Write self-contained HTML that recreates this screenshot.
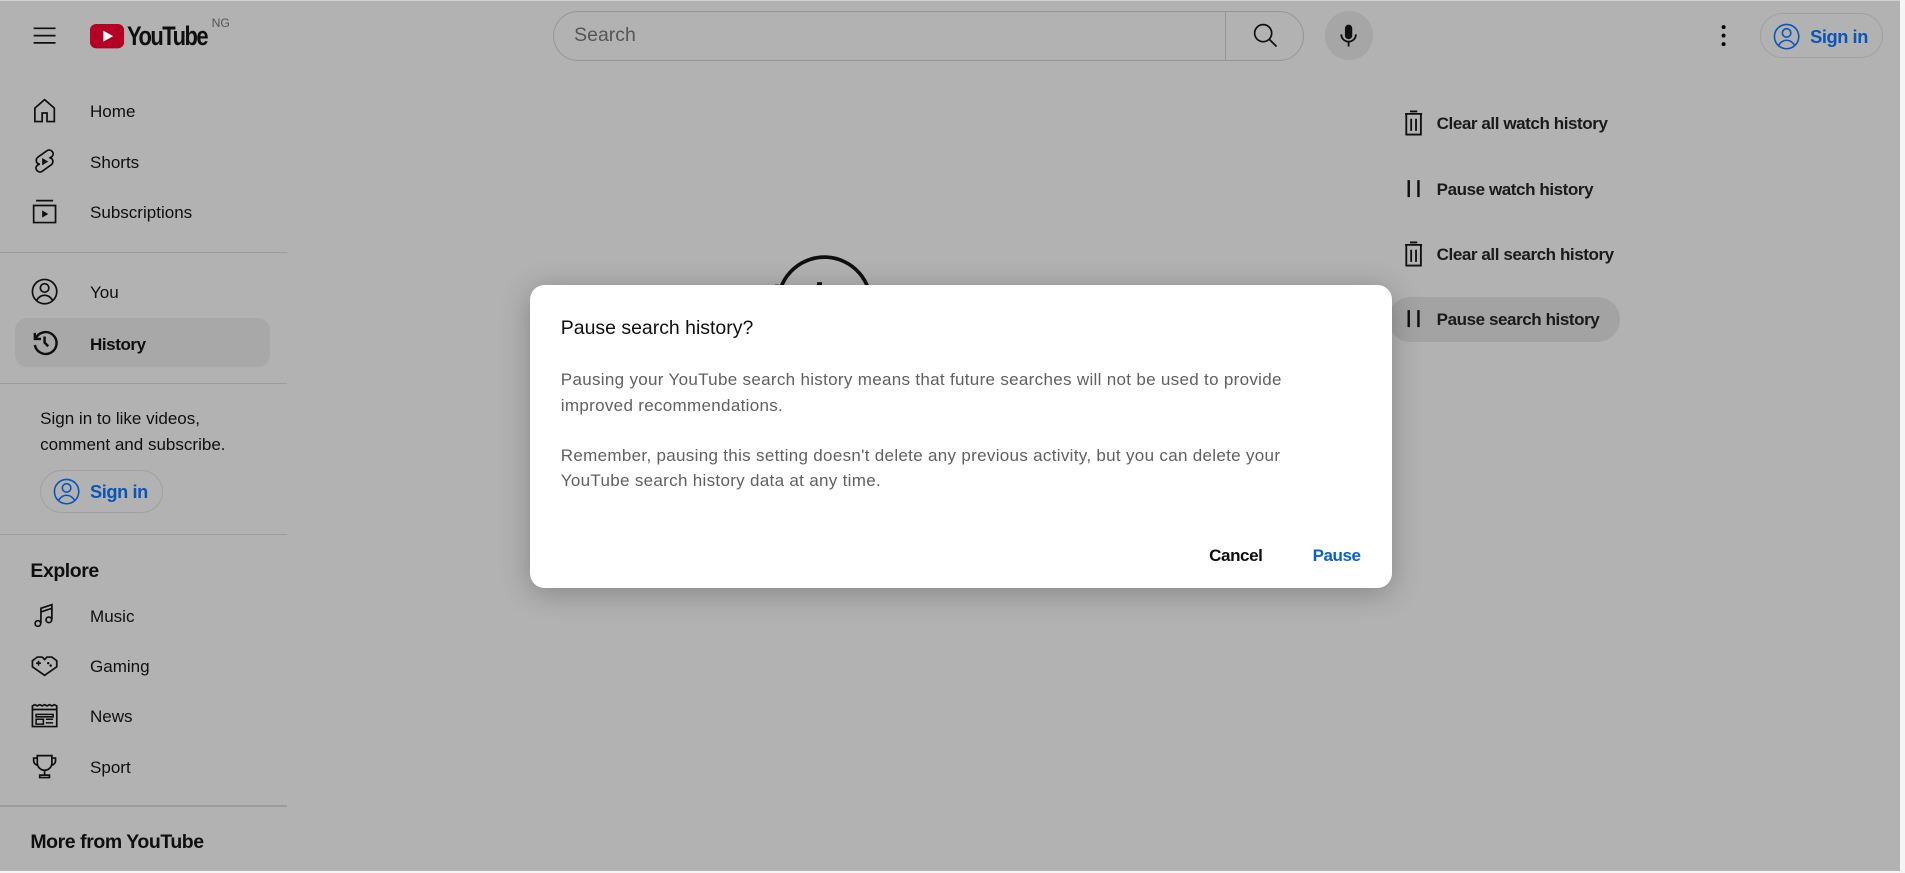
<!DOCTYPE html>
<html><head><meta charset="utf-8"><style>
html,body{margin:0;padding:0;width:1905px;height:873px;overflow:hidden;background:#fff;}
#w{zoom:1.21648;width:1566px;height:719px;position:relative;background:#b2b2b2;font-family:"Liberation Sans",sans-serif;color:#0f0f0f;overflow:hidden;}
.a{position:absolute;}
.t{position:absolute;font-size:14px;line-height:16px;white-space:nowrap;}
.b{font-weight:bold;letter-spacing:-0.35px;}
.ic{position:absolute;width:24px;height:24px;}
.div{position:absolute;left:0;width:236px;height:1px;background:#9c9c9c;}
svg{overflow:visible}
</style></head><body><div id="w">
<div class="a" style="left:0;top:0;width:1566px;height:1px;background:#d0d0d0"></div>
<div class="a" style="left:1562px;top:0;width:4px;height:719px;background:#f5f5f5"></div>
<div class="a" style="left:0;top:716px;width:1566px;height:3px;background:#f5f5f5"></div>
<!-- header -->
<svg class="ic" style="left:25px;top:17px" viewBox="0 0 24 24"><path d="M3 6h18M3 12h18M3 18h18" stroke="#0f0f0f" stroke-width="1.4"/></svg>
<svg class="a" style="left:74px;top:20px" width="28" height="20" viewBox="0 0 28 20"><rect width="28" height="20" rx="5" fill="#b30024"/><path d="M11 5.5v9l8-4.5z" fill="#fff"/></svg>
<div class="a" style="left:104px;top:17px;font-size:22px;letter-spacing:-1.5px;font-weight:bold;transform:scaleX(.82);transform-origin:left;line-height:26px;">YouTube</div>
<div class="a" style="left:174px;top:13px;font-size:10px;color:#555">NG</div>
<div class="a" style="left:455px;top:9px;width:617px;height:41px;border:1px solid #969696;border-radius:21px;box-sizing:border-box;"></div>
<div class="a" style="left:1007px;top:10px;width:1px;height:39px;background:#969696"></div>
<div class="a" style="left:472px;top:20px;font-size:16px;color:#555">Search</div>
<svg class="ic" style="left:1028px;top:17px" viewBox="0 0 24 24"><circle cx="10" cy="10" r="7" fill="none" stroke="#0f0f0f" stroke-width="1.4"/><path d="M15 15l6 6" stroke="#0f0f0f" stroke-width="1.4"/></svg>
<div class="a" style="left:1089px;top:9px;width:40px;height:40px;border-radius:50%;background:#a6a6a6"></div>
<svg class="ic" style="left:1097px;top:17px" viewBox="0 0 24 24"><rect x="9" y="3" width="6" height="12" rx="3" fill="#0f0f0f"/><path d="M6 11a6 6 0 0 0 12 0M12 17v4" stroke="#0f0f0f" stroke-width="1.5" fill="none"/></svg>
<svg class="ic" style="left:1405px;top:17px" viewBox="0 0 24 24"><circle cx="12" cy="5" r="1.6"/><circle cx="12" cy="12" r="1.6"/><circle cx="12" cy="19" r="1.6"/></svg>
<div class="a" style="left:1447px;top:11px;width:101px;height:37px;border:1px solid #a0a0a0;border-radius:19px;box-sizing:border-box"></div>
<svg class="ic" style="left:1457px;top:18px" viewBox="0 0 24 24"><circle cx="12" cy="12" r="10" fill="none" stroke="#0a55b8" stroke-width="1.3"/><circle cx="12" cy="9" r="3.5" fill="none" stroke="#0a55b8" stroke-width="1.3"/><path d="M5.5 19c2-3 4-4 6.5-4s4.5 1 6.5 4" fill="none" stroke="#0a55b8" stroke-width="1.3"/></svg>
<div class="t b" style="left:1488px;top:22px;color:#0a55b8;font-size:15px">Sign in</div>
<!-- sidebar -->
<svg class="ic" style="left:25px;top:79px" viewBox="0 0 24 24"><path d="M4 10l8-7 8 7v11h-6v-7h-4v7H4z" fill="none" stroke="#0f0f0f" stroke-width="1.4"/></svg>
<div class="t" style="left:74px;top:84px">Home</div>
<svg class="ic" style="left:25px;top:121px" viewBox="0 0 24 24"><path d="M14 3c3-2 7 2 4 5l-2 1c3 0 4 4 1 6l-7 5c-3 2-7-2-4-5l2-1c-3 0-4-4-1-6z" fill="none" stroke="#0f0f0f" stroke-width="1.4"/><path d="M10 9v6l5-3z" fill="#0f0f0f"/></svg>
<div class="t" style="left:74px;top:126px">Shorts</div>
<svg class="ic" style="left:25px;top:162px" viewBox="0 0 24 24"><path d="M5 3h14M3 7h18v14H3z" fill="none" stroke="#0f0f0f" stroke-width="1.4"/><path d="M10 11v6l5-3z" fill="#0f0f0f"/></svg>
<div class="t" style="left:74px;top:167px">Subscriptions</div>
<div class="div" style="top:207px"></div>
<svg class="ic" style="left:25px;top:228px" viewBox="0 0 24 24"><circle cx="12" cy="12" r="10" fill="none" stroke="#0f0f0f" stroke-width="1.4"/><circle cx="12" cy="9" r="3.5" fill="none" stroke="#0f0f0f" stroke-width="1.4"/><path d="M5.5 19c2-3 4-4 6.5-4s4.5 1 6.5 4" fill="none" stroke="#0f0f0f" stroke-width="1.4"/></svg>
<div class="t" style="left:74px;top:233px">You</div>
<div class="a" style="left:12px;top:261px;width:210px;height:41px;border-radius:10px;background:#a8a8a8"></div>
<svg class="ic" style="left:25px;top:270px" viewBox="0 0 24 24"><path d="M4 4v5h5" fill="none" stroke="#0f0f0f" stroke-width="2"/><path d="M4.5 9A9 9 0 1 1 4 14" fill="none" stroke="#0f0f0f" stroke-width="2"/><path d="M12 7v5l3 3" fill="none" stroke="#0f0f0f" stroke-width="2"/></svg>
<div class="t b" style="left:74px;top:275px">History</div>
<div class="div" style="top:315px"></div>
<div class="t" style="left:33px;top:334px;line-height:21px">Sign in to like videos,<br>comment and subscribe.</div>
<div class="a" style="left:33px;top:386px;width:101px;height:36px;border:1px solid #a0a0a0;border-radius:18px;box-sizing:border-box"></div>
<svg class="ic" style="left:43px;top:392px" viewBox="0 0 24 24"><circle cx="12" cy="12" r="10" fill="none" stroke="#0a55b8" stroke-width="1.3"/><circle cx="12" cy="9" r="3.5" fill="none" stroke="#0a55b8" stroke-width="1.3"/><path d="M5.5 19c2-3 4-4 6.5-4s4.5 1 6.5 4" fill="none" stroke="#0a55b8" stroke-width="1.3"/></svg>
<div class="t b" style="left:74px;top:396px;color:#0a55b8;font-size:15px">Sign in</div>
<div class="div" style="top:439px"></div>
<div class="t b" style="left:25px;top:461px;font-size:16px;line-height:18px">Explore</div>
<svg class="ic" style="left:25px;top:494px" viewBox="0 0 24 24"><path d="M9 18V6l9-3v12" fill="none" stroke="#0f0f0f" stroke-width="1.4"/><circle cx="6.5" cy="18.5" r="2.3" fill="none" stroke="#0f0f0f" stroke-width="1.4"/><circle cx="15.5" cy="15.5" r="2.3" fill="none" stroke="#0f0f0f" stroke-width="1.4"/><path d="M9 9l9-3" stroke="#0f0f0f" stroke-width="1.4"/></svg>
<div class="t" style="left:74px;top:499px">Music</div>
<svg class="ic" style="left:25px;top:535px" viewBox="0 0 24 24"><path d="M2 8l4-3h4l2 2 2-2h4l4 3v5l-10 7L2 13z" fill="none" stroke="#0f0f0f" stroke-width="1.4"/><path d="M5 10h4M7 8v4" stroke="#0f0f0f" stroke-width="1.3"/><circle cx="15" cy="10" r="1"/><circle cx="17" cy="12" r="1"/></svg>
<div class="t" style="left:74px;top:540px">Gaming</div>
<svg class="ic" style="left:25px;top:576px" viewBox="0 0 24 24"><path d="M2 4l2-1 2 1 2-1 2 1 2-1 2 1 2-1 2 1 2-1 2 1v17H2z M2 7h20" fill="none" stroke="#0f0f0f" stroke-width="1.4"/><path d="M5 11h14v2H5zM5 15h6v4H5zM13 15h6M13 18h6" fill="none" stroke="#0f0f0f" stroke-width="1.3"/></svg>
<div class="t" style="left:74px;top:581px">News</div>
<svg class="ic" style="left:25px;top:618px" viewBox="0 0 24 24"><path d="M6 3h12v6a6 6 0 0 1-12 0zM6 5H3v2a4 4 0 0 0 4 4M18 5h3v2a4 4 0 0 1-4 4M12 15v4M8 21h8v-2H8z" fill="none" stroke="#0f0f0f" stroke-width="1.4"/></svg>
<div class="t" style="left:74px;top:623px">Sport</div>
<div class="div" style="top:662px"></div>
<div class="t b" style="left:25px;top:684px;font-size:16px;line-height:18px">More from YouTube</div>
<!-- right menu -->
<svg class="ic" style="left:1150px;top:90px" viewBox="0 0 24 24"><path d="M9 2h6M5 4h14M6 4v17h12V4M10 8v10M14 8v10" fill="none" stroke="#0f0f0f" stroke-width="1.5"/></svg>
<div class="t b" style="left:1181px;top:94px;color:#1a1a1a">Clear all watch history</div>
<svg class="ic" style="left:1150px;top:143px" viewBox="0 0 24 24"><path d="M8 5v14M16 5v14" stroke="#0f0f0f" stroke-width="2"/></svg>
<div class="t b" style="left:1181px;top:148px;color:#1a1a1a">Pause watch history</div>
<svg class="ic" style="left:1150px;top:197px" viewBox="0 0 24 24"><path d="M9 2h6M5 4h14M6 4v17h12V4M10 8v10M14 8v10" fill="none" stroke="#0f0f0f" stroke-width="1.5"/></svg>
<div class="t b" style="left:1181px;top:201px;color:#1a1a1a">Clear all search history</div>
<div class="a" style="left:1141px;top:244px;width:191px;height:37px;border-radius:19px;background:#a3a3a3"></div>
<svg class="ic" style="left:1150px;top:250px" viewBox="0 0 24 24"><path d="M8 5v14M16 5v14" stroke="#0f0f0f" stroke-width="2"/></svg>
<div class="t b" style="left:1181px;top:255px;color:#1a1a1a">Pause search history</div>
<!-- big history icon peek -->
<svg class="a" style="left:630px;top:222px" width="100" height="40" viewBox="0 0 100 40"><path d="M10 25A38 38 0 0 1 86 30" fill="none" stroke="#0f0f0f" stroke-width="3"/><path d="M9 12v20" stroke="#0f0f0f" stroke-width="3"/><rect x="42" y="10" width="4" height="8" fill="#0f0f0f"/></svg>
<!-- dialog -->
<div class="a" style="left:436px;top:234px;width:708px;height:249px;background:#fff;border-radius:12px;box-shadow:0 4px 24px rgba(0,0,0,.25)"></div>
<div class="t" style="left:461px;top:261px;font-size:16px;line-height:18px">Pause search history?</div>
<div class="t" style="left:461px;top:302px;color:#606060;line-height:21px;letter-spacing:0.25px">Pausing your YouTube search history means that future searches will not be used to provide<br>improved recommendations.</div>
<div class="t" style="left:461px;top:364px;color:#606060;line-height:21px;letter-spacing:0.25px">Remember, pausing this setting doesn't delete any previous activity, but you can delete your<br>YouTube search history data at any time.</div>
<div class="t b" style="left:994px;top:449px;color:#0f0f0f">Cancel</div>
<div class="t b" style="left:1079px;top:449px;color:#065fd4">Pause</div>
</div></body></html>
